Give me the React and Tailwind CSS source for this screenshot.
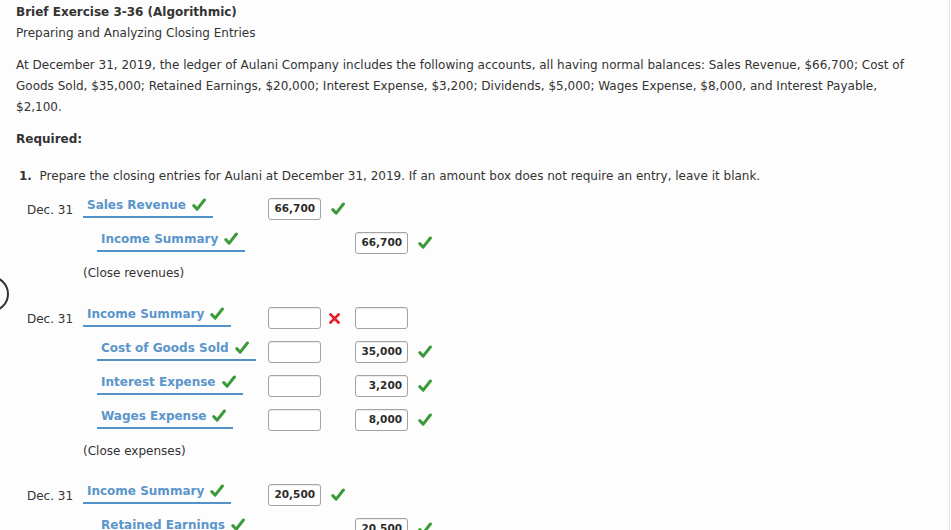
import React from 'react';

const font = { fontFamily: '"DejaVu Sans", Verdana, sans-serif' };

function Check() {
    return (
        <svg width="14" height="14" viewBox="0 0 14 14" className="shrink-0">
            <path d="M1.8 7.6 L5.2 11.2 L12.4 2" fill="none" stroke="#3a9a3a" strokeWidth="3" strokeLinecap="round" strokeLinejoin="round" />
        </svg>
    );
}

function Cross() {
    return (
        <svg width="11" height="11" viewBox="0 0 11 11" className="shrink-0 -ml-[7px]">
            <path d="M1.5 1.5 L9.5 9.5 M9.5 1.5 L1.5 9.5" fill="none" stroke="#ea1c24" strokeWidth="2.6" strokeLinecap="square" />
        </svg>
    );
}

function Amount({ value }) {
    return (
        <div className="w-[53px] h-[22px] border border-[#a3a3a3] rounded-[3px] shadow-[inset_0_1px_1px_rgba(0,0,0,0.08)] flex items-center justify-end pr-[5px] text-[10.5px] font-bold text-[#2b2b2b] bg-white">
            {value}
        </div>
    );
}

function Row({ date, account, indent, debit, debitMark, credit, creditMark }) {
    return (
        <div className="flex items-center h-[34px]">
            <div className="w-[67px] pl-[11px] pt-[1px] text-[12px] text-[#333] whitespace-nowrap">{date}</div>
            <div className={'w-[185px] flex ' + (indent ? 'pl-[14px]' : '')}>
                <div className="flex items-center gap-[6px] pl-[4px] pr-[7px] pb-[2px] border-b-2 border-[#5292c9] text-[12px] font-bold text-[#5a95cb] whitespace-nowrap -mt-[4px]">
                    {account}
                    <Check />
                </div>
            </div>
            <div className="w-[87px] flex items-center">
                {debit !== undefined && <Amount value={debit} />}
                <div className="w-[34px] flex justify-center">
                    {debitMark === 'ok' && <Check />}
                    {debitMark === 'bad' && <Cross />}
                </div>
            </div>
            <div className="flex items-center">
                {credit !== undefined && <Amount value={credit} />}
                <div className="w-[34px] flex justify-center">
                    {creditMark === 'ok' && <Check />}
                </div>
            </div>
        </div>
    );
}

export default function App() {
    return (
        <div className="relative w-[951px] h-[530px] overflow-hidden bg-white text-[#333]" style={font}>
            <div className="absolute left-[-27px] top-[276px] w-[36px] h-[36px] rounded-full border-[2.5px] border-[#333]" />
            <div className="w-[950px] h-full border-r border-[#e6e6e6] bg-[#fdfdfd] pl-[16px] pr-[30px] pt-[2px]">
                <div className="text-[12px] leading-[21px] font-bold">Brief Exercise 3-36 (Algorithmic)</div>
                <div className="text-[12px] leading-[21px]">Preparing and Analyzing Closing Entries</div>
                <p className="mt-[11px] text-[12px] leading-[21px]">
                    At December 31, 2019, the ledger of Aulani Company includes the following accounts, all having normal balances: Sales Revenue, $66,700; Cost of Goods Sold, $35,000; Retained Earnings, $20,000; Interest Expense, $3,200; Dividends, $5,000; Wages Expense, $8,000, and Interest Payable, $2,100.
                </p>
                <div className="mt-[11px] text-[12px] leading-[21px] font-bold">Required:</div>
                <div className="mt-[16px] pl-[3px] text-[12px] leading-[21px]">
                    <b>1.</b>&nbsp; Prepare the closing entries for Aulani at December 31, 2019. If an amount box does not require an entry, leave it blank.
                </div>

                <div className="mt-[5px]">
                    <Row date="Dec. 31" account="Sales Revenue" debit="66,700" debitMark="ok" />
                    <Row indent account="Income Summary" credit="66,700" creditMark="ok" />
                    <div className="mt-[3px] pl-[67px] text-[12px] leading-[21px]">(Close revenues)</div>
                </div>

                <div className="mt-[17px]">
                    <Row date="Dec. 31" account="Income Summary" debit="" debitMark="bad" credit="" />
                    <Row indent account="Cost of Goods Sold" debit="" credit="35,000" creditMark="ok" />
                    <Row indent account="Interest Expense" debit="" credit="3,200" creditMark="ok" />
                    <Row indent account="Wages Expense" debit="" credit="8,000" creditMark="ok" />
                    <div className="mt-[4px] pl-[67px] text-[12px] leading-[21px]">(Close expenses)</div>
                </div>

                <div className="mt-[16px]">
                    <Row date="Dec. 31" account="Income Summary" debit="20,500" debitMark="ok" />
                    <Row indent account="Retained Earnings" credit="20,500" creditMark="ok" />
                </div>
            </div>
        </div>
    );
}
